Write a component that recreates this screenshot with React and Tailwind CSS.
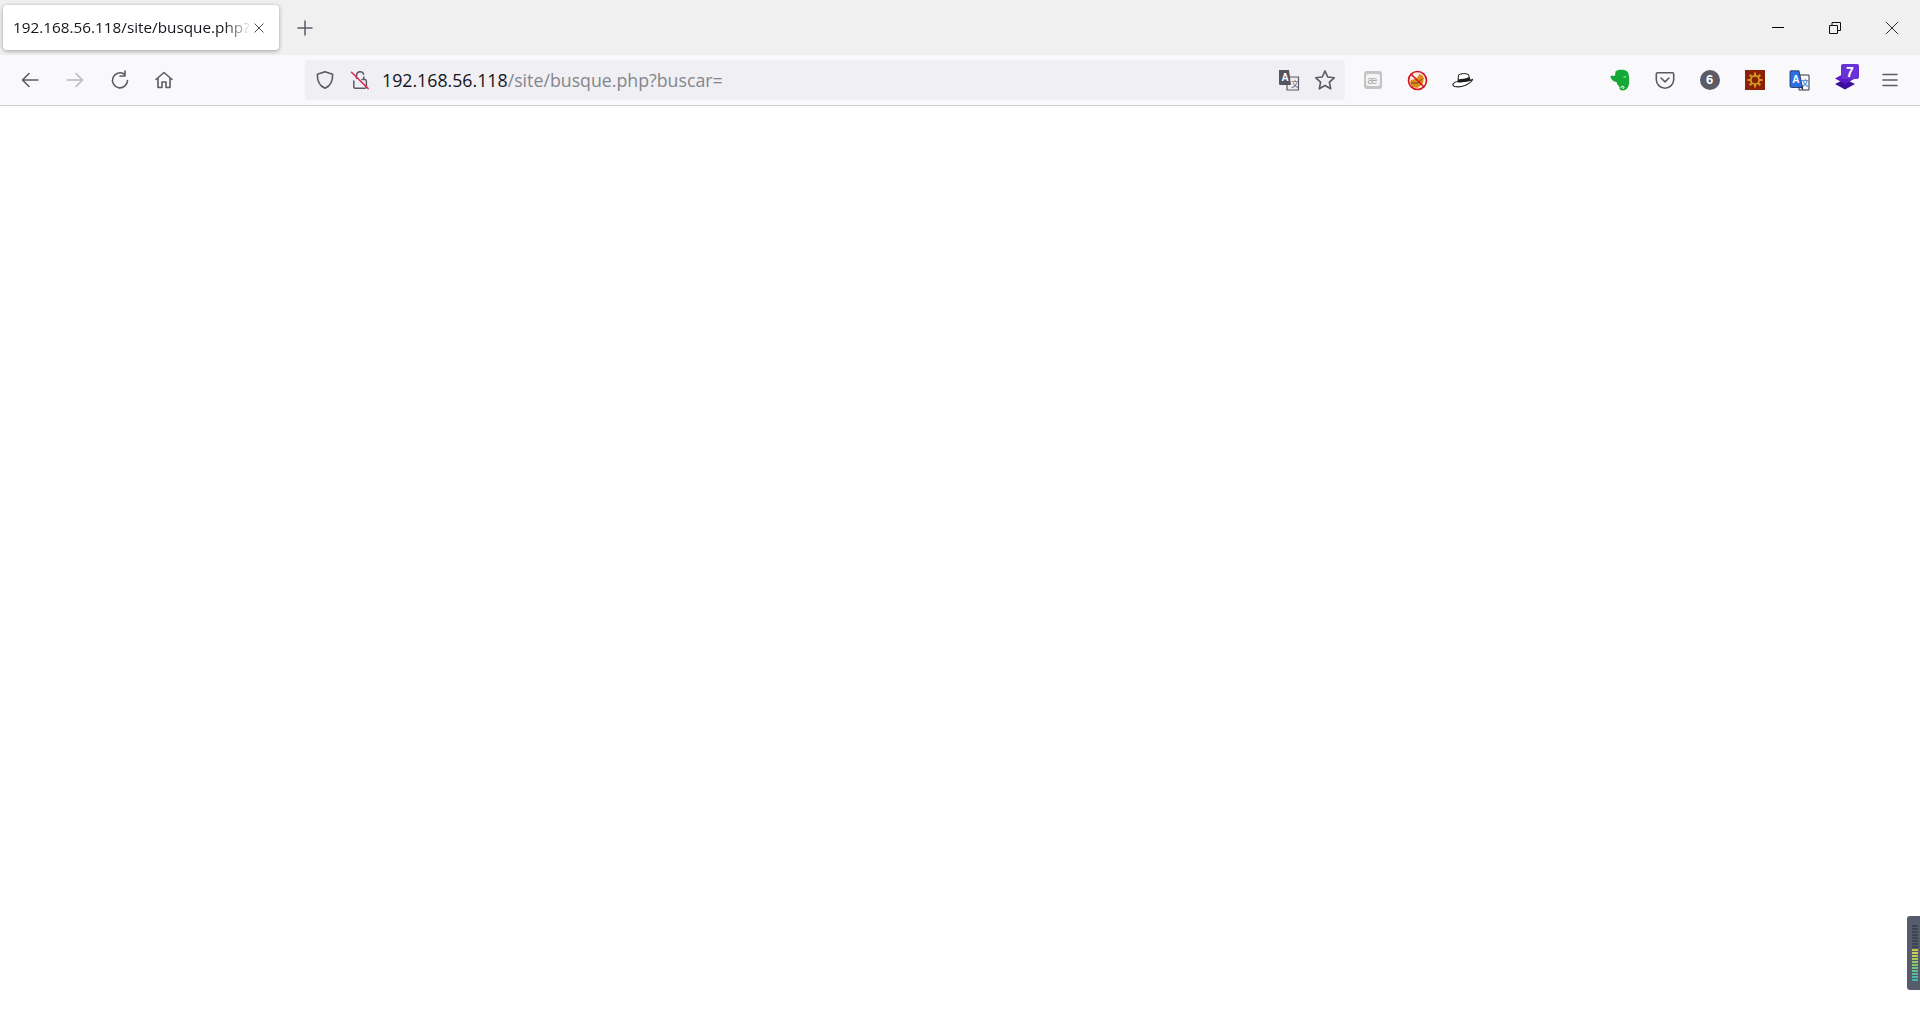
import React from "react";

const stroke = "#5b5b66";

function Btn({ children, className = "" }) {
  return <div className={"flex h-10 w-[45px] shrink-0 items-center justify-center " + className}>{children}</div>;
}

function Line({ d, color = stroke, size = 20, width = 1.6 }) {
  return (
    <svg width={size} height={size} viewBox="0 0 20 20" fill="none" stroke={color} strokeWidth={width} strokeLinecap="round" strokeLinejoin="round">
      <path d={d} />
    </svg>
  );
}

function Shield() {
  return <Line d="M10 1.800 17.600 4.200C17.900 10.800 15.600 15.800 10 18.300 4.400 15.800 2.100 10.800 2.400 4.200Z" />;
}

function BrokenLock() {
  return (
    <svg width="20" height="20" viewBox="0 0 20 20" fill="none" strokeLinecap="round" strokeLinejoin="round">
      <path d="M6.500 8.500V5.500a3.700 3.700 0 0 1 7.200-1.200M13.800 8.800V7M3.800 11V17a1.500 1.500 0 0 0 1.500 1.200H15a1.500 1.500 0 0 0 1.400-1.500V11A1.800 1.800 0 0 0 15 9.500H12" stroke={stroke} strokeWidth="1.500" />
      <path d="M1.500 2.200 18.200 18.600" stroke="#e22850" strokeWidth="1.500" />
    </svg>
  );
}

function TranslateGrey() {
  return (
    <svg width="22" height="22" viewBox="0 0 22 22">
      <path d="M9 8h11.500v13H9z" fill="#eeeef2" stroke="#5b5b66" strokeWidth="1.200" />
      <path d="M1 1h10l2 15H2.500A1.500 1.500 0 0 1 1 14.500Z" fill="#55555f" />
      <text x="3.500" y="12" fontSize="10" fontWeight="700" fill="#fff" fontFamily="Liberation Sans, sans-serif">A</text>
      <text x="13" y="18" fontSize="8" fill="#5b5b66" fontFamily="Noto Sans CJK SC, sans-serif">文</text>
    </svg>
  );
}

function Star() {
  return <Line size={22} width={1.500} d="M10 1.800 12.500 7.300 18.400 8 14 12 15.200 18 10 15 4.800 18 6 12 1.600 8 7.500 7.300Z" />;
}

function AeIcon() {
  return (
    <div className="flex h-[18px] w-[18px] items-center justify-center rounded-[3px] bg-[#c4c4c6]">
      <div className="flex h-[12px] w-[14px] items-center justify-center rounded-[2px] bg-[#f3f3f4] font-['Liberation_Sans',sans-serif] text-[11px] leading-none text-[#a9a9ac]">æ</div>
    </div>
  );
}

function NoScriptIcon() {
  return (
    <svg width="21" height="21" viewBox="0 0 21 21">
      <circle cx="10.500" cy="10.500" r="9" fill="#f7efe0" />
      <path d="M3 13 4 10 8 9 11 7 12 4 15 5 17 8 16 13 13 16 10 18 5 17Z" fill="#de8a1d" />
      <path d="M4 13h7l4-4" stroke="#6d4a12" strokeWidth="1" fill="none" />
      <circle cx="10.500" cy="10.500" r="9" fill="none" stroke="#d5121f" strokeWidth="1.600" />
      <path d="M4.200 4.200 16.800 16.800" stroke="#d5121f" strokeWidth="1.600" />
    </svg>
  );
}

function HatIcon() {
  return (
    <svg width="22" height="16" viewBox="0 0 22 16">
      <path d="M1 12C2.500 10 4.500 9.500 6 9.500L18 8.500 20.500 7.500C20 10 16 12 13 13.500 9 15 5 15 2.500 14.500 1.500 14 .8 13 1 12Z" fill="#fff" stroke="#1c1c1c" strokeWidth="1.100" />
      <path d="M6 9.500 6.500 3C9 1.500 13 1 16.500 2.500L18 8.500Z" fill="#fff" stroke="#1c1c1c" strokeWidth="1" />
      <path d="M6 7.500C9.500 7 14 6.500 17.500 5L18.500 8.500C14 10 9.500 10.500 6 10.500Z" fill="#1c1c1c" />
    </svg>
  );
}

function EvernoteIcon() {
  return (
    <svg width="20" height="22" viewBox="0 0 20 22">
      <path d="M5.500 2.500C7 .8 10 .5 13 .8 16 1 18 2.500 18.500 5 19.500 9 19.500 14 18.500 17 17.500 20 15 21.500 12.500 21.500 10 21.500 9 19.500 9.500 18 8 16.500 7 15 6.500 13 3 12.800 1 10.500.5 7.500L.5 6.800 5 6.800Z" fill="#13a837" />
      <path d="M11 18.500C11 16.800 14 16.700 14 18.500 14 19.700 12.500 19.800 12.300 19" stroke="#fff" strokeWidth="1" fill="none" strokeLinecap="round" />
      <path d="M13.500 8c1-.4 2-.2 2.500.5" stroke="#fff" strokeWidth=".9" fill="none" />
    </svg>
  );
}

function PocketIcon() {
  return (
    <svg width="20" height="18" viewBox="0 0 20 18" fill="none" stroke={stroke} strokeWidth="1.600" strokeLinecap="round" strokeLinejoin="round">
      <path d="M2.500 1.800H17.500A1.300 1.300 0 0 1 18.700 3V8.500A8.700 8.700 0 0 1 1.300 8.500V3A1.300 1.300 0 0 1 2.500 1.800Z" />
      <path d="M6 7l4 3.800L14 7" />
    </svg>
  );
}

function SunIcon() {
  const rays = [0, 45, 90, 135, 180, 225, 270, 315];
  return (
    <svg width="20" height="20" viewBox="0 0 20 20">
      <rect width="20" height="20" fill="#8c2109" />
      <circle cx="10" cy="10" r="4.200" fill="none" stroke="#d99a24" strokeWidth="1.800" />
      {rays.map((r) => (
        <rect key={r} x="9" y="2.500" width="2" height="3" fill="#d99a24" transform={`rotate(${r} 10 10)`} />
      ))}
    </svg>
  );
}

function TranslateBlue() {
  return (
    <svg width="21" height="21" viewBox="0 0 21 21">
      <path d="M10 5h10v15H10z" fill="#f4f6fb" stroke="#34343c" strokeWidth="1" />
      <text x="12" y="16" fontSize="8" fontWeight="700" fill="#5b8fdc" fontFamily="Noto Sans CJK SC, sans-serif">文</text>
      <path d="M1.500 .800H10L13.500 17.500H2.500A1.500 1.500 0 0 1 1 16V1.500Z" fill="#2f6fe4" stroke="#1b2b4a" strokeWidth=".8" />
      <path d="M11 17 14.500 20.500 13.500 16.500Z" fill="#1b2b4a" />
      <text x="3.200" y="12.500" fontSize="10" fontWeight="700" fill="#fff" fontFamily="Liberation Sans, sans-serif">A</text>
    </svg>
  );
}

function StackIcon() {
  return (
    <div className="relative h-10 w-[45px] shrink-0">
      <svg width="22" height="20" viewBox="0 0 22 20" className="absolute left-[12px] top-[10px]">
        <path d="M11 9 21 14 11 19.500 1 14Z" fill="#3a0f9c" />
        <path d="M11 3 21 8.500 11 14 1 8.500Z" fill="#5b1bc8" />
      </svg>
      <div className="absolute left-[19px] top-[4px] flex h-[15px] w-[18px] items-center justify-center rounded-[2px] bg-[#6a32d6] font-['Liberation_Sans',sans-serif] text-[14px] font-bold leading-none text-white">7</div>
    </div>
  );
}

function LevelMeter() {
  const lit = ["#c9c43f", "#cfd05e", "#bccb5c", "#a9c95a", "#96c76a", "#86c46e", "#74c27e", "#62bf8a", "#56bd96", "#4cbca2", "#40baa8"];
  return (
    <div className="absolute bottom-[40px] right-0 flex h-[74px] w-[13px] flex-col gap-[1px] rounded-l-[3px] bg-[#565c6c] pl-[5px] pt-[9px]">
      {Array.from({ length: 8 }).map((_, i) => (
        <div key={i} className="h-[2px] w-[6px] bg-[#3f4350]" />
      ))}
      {lit.map((c) => (
        <div key={c} className="h-[2px] w-[6px]" style={{ backgroundColor: c }} />
      ))}
    </div>
  );
}

export default function App() {
  return (
    <div className="relative h-[1030px] w-full overflow-hidden bg-white font-['Open_Sans',sans-serif]">
      {/* tab strip */}
      <div className="flex h-[55px] items-center bg-[#f0f0f0] pl-[3px]">
        <div className="flex h-[45px] w-[276px] items-center rounded-[4px] bg-white pl-[10px] shadow-[0_1px_4px_rgba(0,0,0,0.35)]">
          <span className="w-[239px] overflow-hidden whitespace-nowrap text-[15.300px] text-[#15141a] [mask-image:linear-gradient(to_right,black_88%,transparent)]">192.168.56.118/site/busque.php?</span>
          <Line size={14} width={1.300} color="#3a3a42" d="M4 4 16 16M16 4 4 16" />
        </div>
        <div className="ml-[16px]">
          <Line size={20} d="M10 3V17M3 10H17" width={1.500} />
        </div>
        <div className="ml-auto flex items-center">
          <div className="flex w-[57px] justify-center">
            <div className="h-[1.500px] w-3 bg-black" />
          </div>
          <div className="flex w-[57px] justify-center">
            <svg width="12" height="12" viewBox="0 0 12 12" fill="none" stroke="#111" strokeWidth="1">
              <path d="M.5 3.500h8v8h-8zM3 3.500V.5h8.500v8H8.500" />
            </svg>
          </div>
          <div className="flex w-[57px] justify-center">
            <Line size={16} width={1.100} color="#111" d="M3 3 17 17M17 3 3 17" />
          </div>
        </div>
      </div>

      {/* nav toolbar */}
      <div className="flex h-[51px] items-center border-b border-[#cfcfd8] bg-[#f9f9fb] pl-[7px]">
        <Btn><Line d="M18 10H2.500M9 3.500 2.500 10 9 16.500" /></Btn>
        <Btn><Line color="#b9b9bf" d="M2 10H17.500M11 3.500 17.500 10 11 16.500" /></Btn>
        <Btn><Line d="M17.500 10.500A7.500 7.500 0 1 1 14 4M15 1V6H10" /></Btn>
        <Btn className="!w-[44px]"><Line d="M2 9.500 10 2.500 18 9.500M4 8V17.500H8V12H12V17.500H16V8" /></Btn>

        <div className="ml-[119px] flex h-10 w-[1040px] shrink-0 items-center rounded-[4px] bg-[#f0f0f4] pl-[10px] pr-[2px]">
          <Shield />
          <div className="ml-[15px]"><BrokenLock /></div>
          <div className="ml-[12px] whitespace-nowrap text-[17.750px] text-[#15141a]">
            192.168.56.118<span className="text-[#85858c]">/site/busque.php?buscar=</span>
          </div>
          <div className="ml-auto flex items-center">
            <Btn className="!w-[36px]"><TranslateGrey /></Btn>
            <Btn className="!w-[36px]"><Star /></Btn>
          </div>
        </div>

        <div className="ml-[5px] flex">
          <Btn><AeIcon /></Btn>
          <Btn><NoScriptIcon /></Btn>
          <Btn><HatIcon /></Btn>
        </div>

        <div className="ml-auto flex pr-[8px]">
          <Btn><EvernoteIcon /></Btn>
          <Btn><PocketIcon /></Btn>
          <Btn>
            <div className="flex h-5 w-5 items-center justify-center rounded-full bg-[#5b5b66] font-['Liberation_Sans',sans-serif] text-[13px] font-bold text-white">6</div>
          </Btn>
          <Btn><SunIcon /></Btn>
          <Btn><TranslateBlue /></Btn>
          <StackIcon />
          <Btn><Line d="M3 4.500H17M3 10H17M3 15.500H17" /></Btn>
        </div>
      </div>

      <LevelMeter />
    </div>
  );
}
